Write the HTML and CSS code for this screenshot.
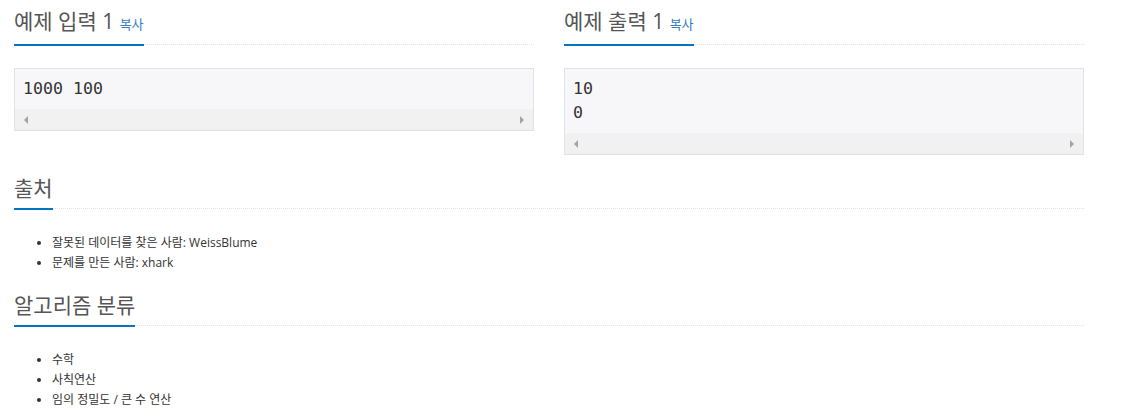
FILE: index.html
```html
<!DOCTYPE html>
<html lang="ko">
<head>
<meta charset="utf-8">
<title>문제</title>
<link rel="stylesheet" href="styles.css">
</head>
<body>
<div class="page">
  <div class="samples">
    <section class="sample">
      <div class="headline"><h2>예제 입력 1 <a class="copy">복사</a></h2></div>
      <div class="codebox">
        <pre class="code">1000 100</pre>
        <div class="hscroll"><span class="arrow left"></span><span class="arrow right"></span></div>
      </div>
    </section>
    <section class="sample">
      <div class="headline"><h2>예제 출력 1 <a class="copy">복사</a></h2></div>
      <div class="codebox">
        <pre class="code">10
0</pre>
        <div class="hscroll"><span class="arrow left"></span><span class="arrow right"></span></div>
      </div>
    </section>
  </div>

  <section class="block">
    <div class="headline"><h2>출처</h2></div>
    <ul class="list">
      <li>잘못된 데이터를 찾은 사람: WeissBlume</li>
      <li>문제를 만든 사람: xhark</li>
    </ul>
  </section>

  <section class="block">
    <div class="headline"><h2>알고리즘 분류</h2></div>
    <ul class="list">
      <li>수학</li>
      <li>사칙연산</li>
      <li>임의 정밀도 / 큰 수 연산</li>
    </ul>
  </section>
</div>
</body>
</html>
```

FILE: styles.css
```css
* { box-sizing: border-box; }
html, body { margin: 0; padding: 0; background: #fff; }
body {
  font-family: "Open Sans", "Noto Sans CJK KR", sans-serif;
  color: #333;
}
.page {
  width: 1070px;
  margin-left: 14px;
  padding-top: 10px;
}
.samples {
  display: grid;
  grid-template-columns: 520px 520px;
  column-gap: 30px;
  align-items: start;
}
.headline {
  border-bottom: 1px dotted #e2e2e2;
}
.headline h2 {
  display: inline-block;
  margin: 0 0 -2px 0;
  padding-bottom: 9px;
  font-size: 21px;
  line-height: 22px;
  font-weight: 400;
  color: #555;
  border-bottom: 2px solid #0076c0;
}
.copy {
  font-size: 13px;
  color: #3b7cc0;
  text-decoration: none;
}
.codebox {
  margin-top: 23px;
  border: 1px solid #e1e1e8;
  background: #f7f7f9;
}
.code {
  margin: 0;
  padding: 8px 8px 8px 8px;
  font-family: "DejaVu Sans Mono", monospace;
  font-size: 16.6px;
  line-height: 24px;
  color: #333;
  overflow: hidden;
}
.hscroll {
  height: 21px;
  background: #f1f1f1;
  display: flex;
  justify-content: space-between;
  align-items: center;
  padding: 0 9px;
}
.arrow {
  width: 0;
  height: 0;
  border-top: 4px solid transparent;
  border-bottom: 4px solid transparent;
}
.arrow.left { border-right: 4px solid #a3a3a3; }
.arrow.right { border-left: 4px solid #a3a3a3; }
.block {
  margin-top: 22px;
}
.block + .block {
  margin-top: 21px;
}
.list {
  margin: 24px 0 0 0;
  padding-left: 38px;
  font-size: 12px;
  line-height: 20px;
  color: #333;
}
```
